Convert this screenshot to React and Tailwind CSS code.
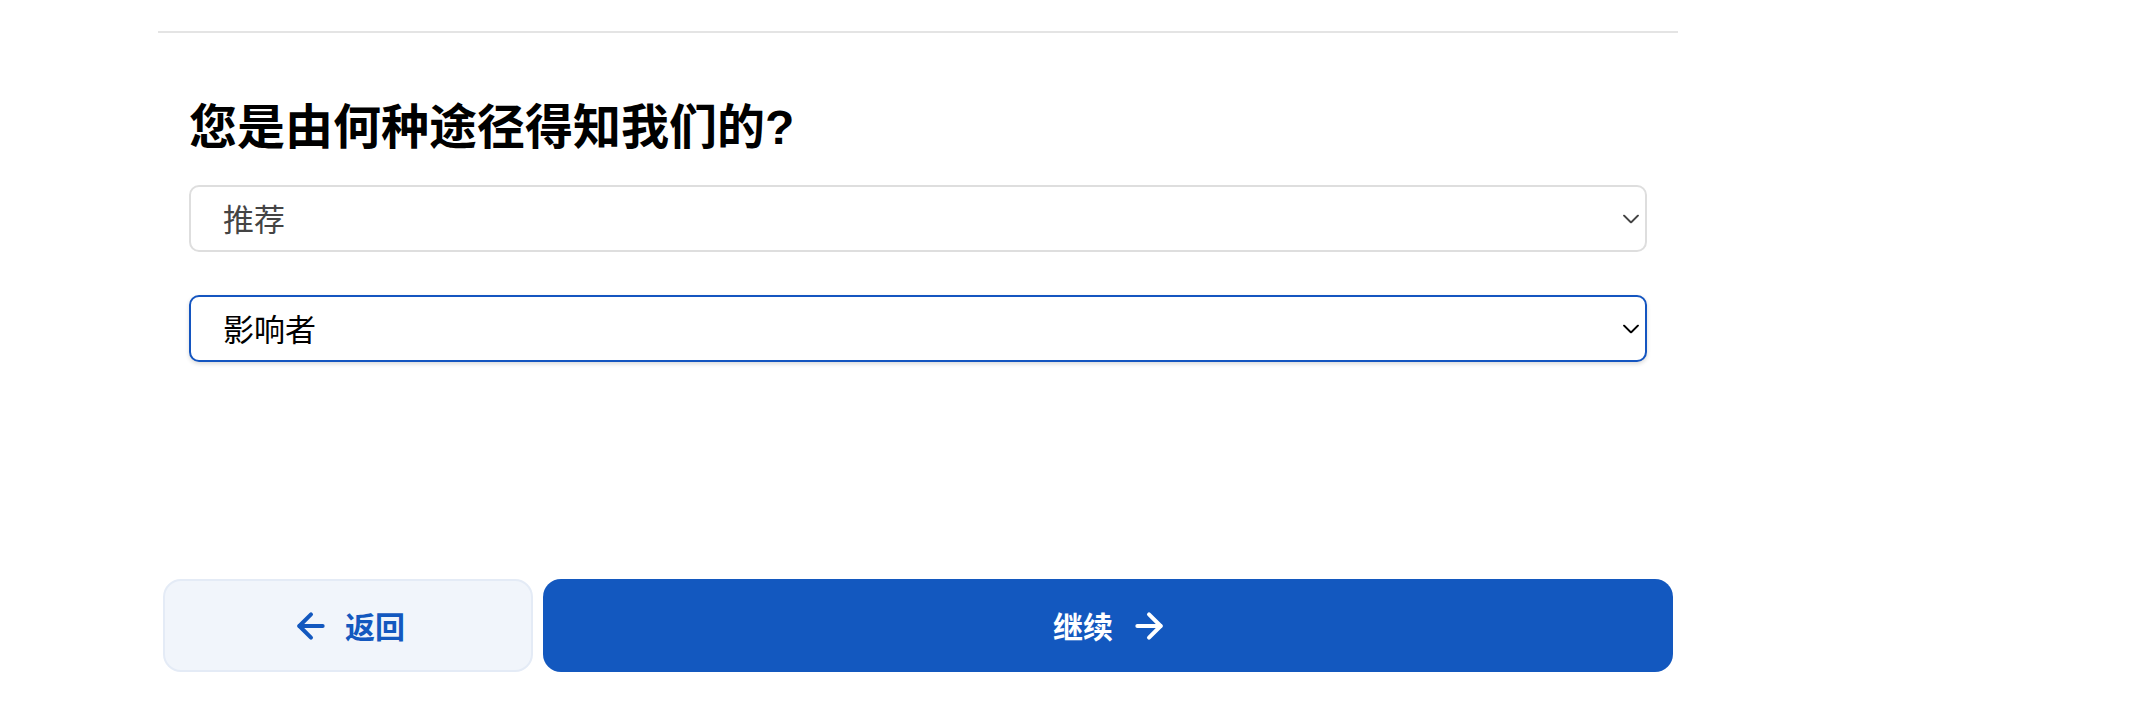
import React, { useState } from 'react';
import { ArrowLeft, ArrowRight } from 'lucide-react';

const sources = ['推荐', '搜索引擎', '社交媒体', '广告', '其他'];
const details = ['影响者', '朋友', '同事', '家人'];

function Chevron({ className }) {
  return (
    <svg
      viewBox="0 0 16 9"
      className={`pointer-events-none absolute right-[8px] top-1/2 h-[9px] w-[16px] -translate-y-1/2 ${className}`}
      fill="none"
      stroke="currentColor"
      strokeWidth="1.8"
      strokeLinecap="round"
      strokeLinejoin="round"
    >
      <path d="M1 1l7 7 7-7" />
    </svg>
  );
}

export default function App() {
  const [source, setSource] = useState('推荐');
  const [detail, setDetail] = useState('影响者');

  return (
    <div
      className="min-h-screen bg-white pt-[31px] pl-[158px]"
      style={{ fontFamily: '"Noto Sans CJK SC", "Noto Sans", sans-serif' }}
    >
      <div className="w-[1520px] border-t-2 border-[#e4e4e4]">
        <div className="px-[31px] pt-[62px]">
          <h1 className="h-[56px] text-[48px] font-bold leading-[56px] text-black">
            您是由何种途径得知我们的
            <span className="leading-[0]" style={{ fontFamily: '"Liberation Sans", sans-serif' }}>?</span>
          </h1>

          <div className="relative mt-[34px]">
            <select
              value={source}
              onChange={(e) => setSource(e.target.value)}
              className="h-[67px] w-full appearance-none rounded-[10px] border-2 border-[#dedede] bg-white pl-[32px] text-[31px] text-[#444444] outline-none"
            >
              {sources.map((s) => (
                <option key={s}>{s}</option>
              ))}
            </select>
            <Chevron className="text-[#444444]" />
          </div>

          <div className="relative mt-[43px]">
            <select
              value={detail}
              onChange={(e) => setDetail(e.target.value)}
              className="h-[67px] w-full appearance-none rounded-[10px] border-2 border-[#1455c0] bg-white pl-[32px] text-[31px] text-black shadow-[0_2px_4px_rgba(0,0,0,0.15)] outline-none"
            >
              {details.map((s) => (
                <option key={s}>{s}</option>
              ))}
            </select>
            <Chevron className="text-black" />
          </div>
        </div>

        <div className="mt-[217px] flex gap-[10px] px-[5px]">
          <button className="flex h-[93px] w-[370px] items-center justify-center gap-[14px] rounded-[18px] border-2 border-[#e4ebf6] bg-[#f1f5fb] text-[30px] font-bold text-[#1358bf]">
            <ArrowLeft size={40} strokeWidth={2.4} />
            返回
          </button>
          <button className="flex h-[93px] flex-1 items-center justify-center gap-[16px] rounded-[18px] bg-[#1358bf] pl-[6px] text-[30px] font-bold text-white">
            继续
            <ArrowRight size={40} strokeWidth={2.4} />
          </button>
        </div>
      </div>
    </div>
  );
}
